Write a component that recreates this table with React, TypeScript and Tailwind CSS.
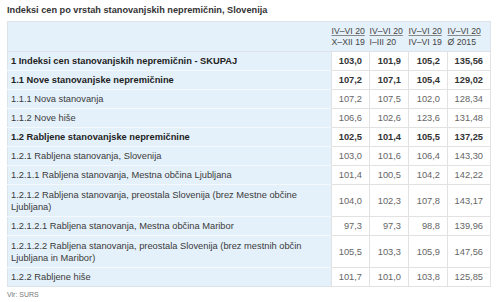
import React from 'react';

type Row = {
    label: string;
    values: string[];
    bold?: boolean;
    tall?: boolean;
};

const rows: Row[] = [
    { label: '1 Indeksi cen stanovanjskih nepremičnin - SKUPAJ', values: ['103,0', '101,9', '105,2', '135,56'], bold: true },
    { label: '1.1 Nove stanovanjske nepremičnine', values: ['107,2', '107,1', '105,4', '129,02'], bold: true },
    { label: '1.1.1 Nova stanovanja', values: ['107,2', '107,5', '102,0', '128,34'] },
    { label: '1.1.2 Nove hiše', values: ['106,6', '102,6', '123,6', '131,48'] },
    { label: '1.2 Rabljene stanovanjske nepremičnine', values: ['102,5', '101,4', '105,5', '137,25'], bold: true },
    { label: '1.2.1 Rabljena stanovanja, Slovenija', values: ['103,0', '101,6', '106,4', '143,30'] },
    { label: '1.2.1.1 Rabljena stanovanja, Mestna občina Ljubljana', values: ['101,4', '100,5', '104,2', '142,22'] },
    { label: '1.2.1.2 Rabljena stanovanja, preostala Slovenija (brez Mestne občine Ljubljana)', values: ['104,0', '102,3', '107,8', '143,17'], tall: true },
    { label: '1.2.1.2.1 Rabljena stanovanja, Mestna občina Maribor', values: ['97,3', '97,3', '98,8', '139,96'] },
    { label: '1.2.1.2.2 Rabljena stanovanja, preostala Slovenija (brez mestnih občin Ljubljana in Maribor)', values: ['105,5', '103,3', '105,9', '147,56'], tall: true },
    { label: '1.2.2 Rabljene hiše', values: ['101,7', '101,0', '103,8', '125,85'] },
];

const headers = [
    ['IV–VI 20', 'X–XII 19'],
    ['IV–VI 20', 'I–III 20'],
    ['IV–VI 20', 'IV–VI 19'],
    ['IV–VI 20', 'Ø 2015'],
];

export default function App() {
    return (
        <div className="w-[500px] h-[302px] bg-white px-[7px] pt-[4px] font-['Liberation_Sans',Arial,sans-serif] overflow-hidden">
            <div className="text-[9.2px] leading-[12px] font-bold text-[#333]">
                Indeksi cen po vrstah stanovanjskih nepremičnin, Slovenija
            </div>

            <table className="mt-[5px] w-[483px] table-fixed border-collapse border border-[#dde3e8] text-[9.3px] leading-[12px]">
                <colgroup>
                    <col className="w-[324px]" />
                    <col className="w-[38px]" />
                    <col className="w-[39px]" />
                    <col className="w-[39px]" />
                    <col className="w-[43px]" />
                </colgroup>
                <thead>
                    <tr className="h-[30px] bg-[#e5f1fa]">
                        <th className="border-b border-[#dde3e8]" />
                        {headers.map((h, i) => (
                            <th
                                key={i}
                                className="align-bottom pb-[3px] pl-0 text-left font-normal text-[8.7px] leading-[11px] text-[#444] whitespace-nowrap border-b border-[#dde3e8]"
                            >
                                <div className="underline decoration-[#888]">{h[0]}</div>
                                <div>{h[1]}</div>
                            </th>
                        ))}
                    </tr>
                </thead>
                <tbody>
                    {rows.map((r, i) => (
                        <tr key={i} className={r.tall ? 'h-[32px]' : 'h-[19px]'}>
                            <td
                                className={`bg-[#e5f1fa] border-t border-[#f4f9fd] pl-[3px] pr-[8px] py-[3px] align-middle ${
                                    r.bold ? 'font-bold text-[#222]' : 'text-[#3a3a3a]'
                                }`}
                            >
                                {r.label}
                            </td>
                            {r.values.map((v, j) => (
                                <td
                                    key={j}
                                    className={`border border-[#e2e2e2] pr-[7px] text-right align-middle whitespace-nowrap ${
                                        r.bold ? 'font-bold text-[#333]' : 'text-[#666]'
                                    }`}
                                >
                                    {v}
                                </td>
                            ))}
                        </tr>
                    ))}
                </tbody>
            </table>

            <div className="mt-[3px] text-[7px] leading-[9px] text-[#777]">Vir: SURS</div>
        </div>
    );
}
